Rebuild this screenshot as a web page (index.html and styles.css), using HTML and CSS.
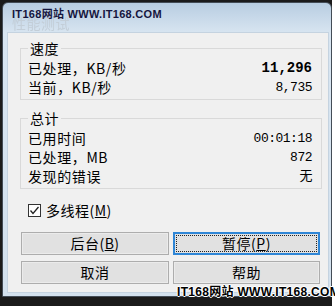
FILE: index.html
```html
<!DOCTYPE html>
<html lang="zh-CN">
<head>
  <meta charset="UTF-8">
  <title>性能测试</title>
  <link rel="stylesheet" href="styles.css">
</head>
<body>
  <div class="window">
    <div class="titlebar">
      <span class="title">性能测试</span>
    </div>

    <div class="client">
      <fieldset class="group">
        <legend>速度</legend>
        <div class="row"><span>已处理，KB/秒</span><span class="num bold">11,296</span></div>
        <div class="row"><span>当前，KB/秒</span><span class="num">8,735</span></div>
      </fieldset>

      <fieldset class="group total">
        <legend>总计</legend>
        <div class="row"><span>已用时间</span><span class="num">00:01:18</span></div>
        <div class="row"><span>已处理，MB</span><span class="num">872</span></div>
        <div class="row"><span>发现的错误</span><span class="num">无</span></div>
      </fieldset>

      <label class="check">
        <svg class="box" width="13" height="13" viewBox="0 0 13 13">
          <rect x="0.5" y="0.5" width="12" height="12" fill="#fff" stroke="#333"/>
          <path d="M2.5 6.5 L5 9.5 L10.5 3" fill="none" stroke="#222" stroke-width="1.3"/>
        </svg>
        <span>多线程(<u>M</u>)</span>
      </label>

      <div class="buttons">
        <button>后台(<u>B</u>)</button>
        <button class="focused">暂停(<u>P</u>)</button>
        <button>取消</button>
        <button>帮助</button>
      </div>
    </div>
  </div>

  <!-- watermarks over the screenshot -->
  <div class="mark mark-top">IT168网站 WWW.IT168.COM</div>
  <div class="mark mark-bottom">IT168网站 WWW.IT168.COM</div>
</body>
</html>
```

FILE: styles.css
```css
* {
  box-sizing: border-box;
}

body {
  margin: 0;
  height: 306px;
  overflow: hidden;
  position: relative;
  background: linear-gradient(to right, #1b1b1b 332px, #fff 332px);
  font-family: "Noto Sans CJK SC", sans-serif;
  font-size: 14px;
  color: #000;
}

/* Window frame */
.window {
  display: flex;
  flex-direction: column;
  width: 330px;
  height: 295px;
  margin: 2px 0 0 2px;
  padding: 0 3px 4px 5px;
  border: 1px solid #434c56;
  border-radius: 6px 6px 0 0;
  background: linear-gradient(#b8cde1, #d8e5f1 30px, #d3e1ee);
}

.titlebar {
  height: 30px;
  padding: 11px 0 0 4px;
  line-height: 18px;
}

.title {
  font-size: 14px;
  letter-spacing: 0.5px;
  color: #c3ced8;
  filter: blur(0.4px);
}

/* Client area */
.client {
  flex: 1;
  display: flex;
  flex-direction: column;
  padding: 6px 6px 0 12px;
  background: #f0f0f0;
  box-shadow: 0 0 0 1px #c5d3e0;
}

.group {
  margin: 0;
  padding: 1px 9px 2px 7px;
  border: 1px solid #d9d9d9;
  min-width: 0;

  & legend {
    padding: 0 2px;
    line-height: 19px;
    letter-spacing: 0.5px;
  }
}

.total {
  margin-top: 9px;
}

.row {
  display: flex;
  justify-content: space-between;
  height: 19px;
  line-height: 19px;
  letter-spacing: 0.6px;
}

.num {
  font-family: "Liberation Mono", "Noto Sans CJK SC", monospace;
  font-size: 13px;
  letter-spacing: -0.5px;
}

.bold {
  font-size: 14px;
  font-weight: bold;
  letter-spacing: 0;
}

/* Checkbox */
.check {
  display: flex;
  align-items: center;
  gap: 5px;
  height: 19px;
  margin: 12px 0 0 8px;
  line-height: 19px;
  letter-spacing: 0.5px;
}

/* Buttons */
.buttons {
  display: grid;
  grid-template-columns: 148px 147px;
  column-gap: 4px;
  row-gap: 6px;
  margin: 12px 0 0 1px;

  & button {
    height: 23px;
    padding: 0;
    border: 1px solid #adadad;
    background: #e1e1e1;
    box-shadow: inset 0 0 0 1px #ebebeb;
    font-family: "Noto Sans CJK SC", sans-serif;
    font-size: 14px;
    letter-spacing: 0.5px;
    line-height: 19px;
    color: #000;
  }

  & .focused {
    border: 2px solid #2f86d6;
    box-shadow: none;
    outline: 1px dotted #222;
    outline-offset: -4px;
  }
}

/* Watermarks */
.mark {
  position: absolute;
  font-family: "Liberation Sans", "Noto Sans CJK SC", sans-serif;
  font-weight: bold;
  white-space: nowrap;
}

.mark-top {
  left: 12px;
  top: 8px;
  font-size: 11px;
  line-height: 12px;
  letter-spacing: 0.3px;
  color: #16163e;
}

.mark-bottom {
  left: 177px;
  top: 286px;
  font-size: 12px;
  line-height: 12px;
  letter-spacing: 0.3px;
  color: #000;
  text-shadow: 1px 0 #fff, -1px 0 #fff, 0 1px #fff, 0 -1px #fff;
}
```
